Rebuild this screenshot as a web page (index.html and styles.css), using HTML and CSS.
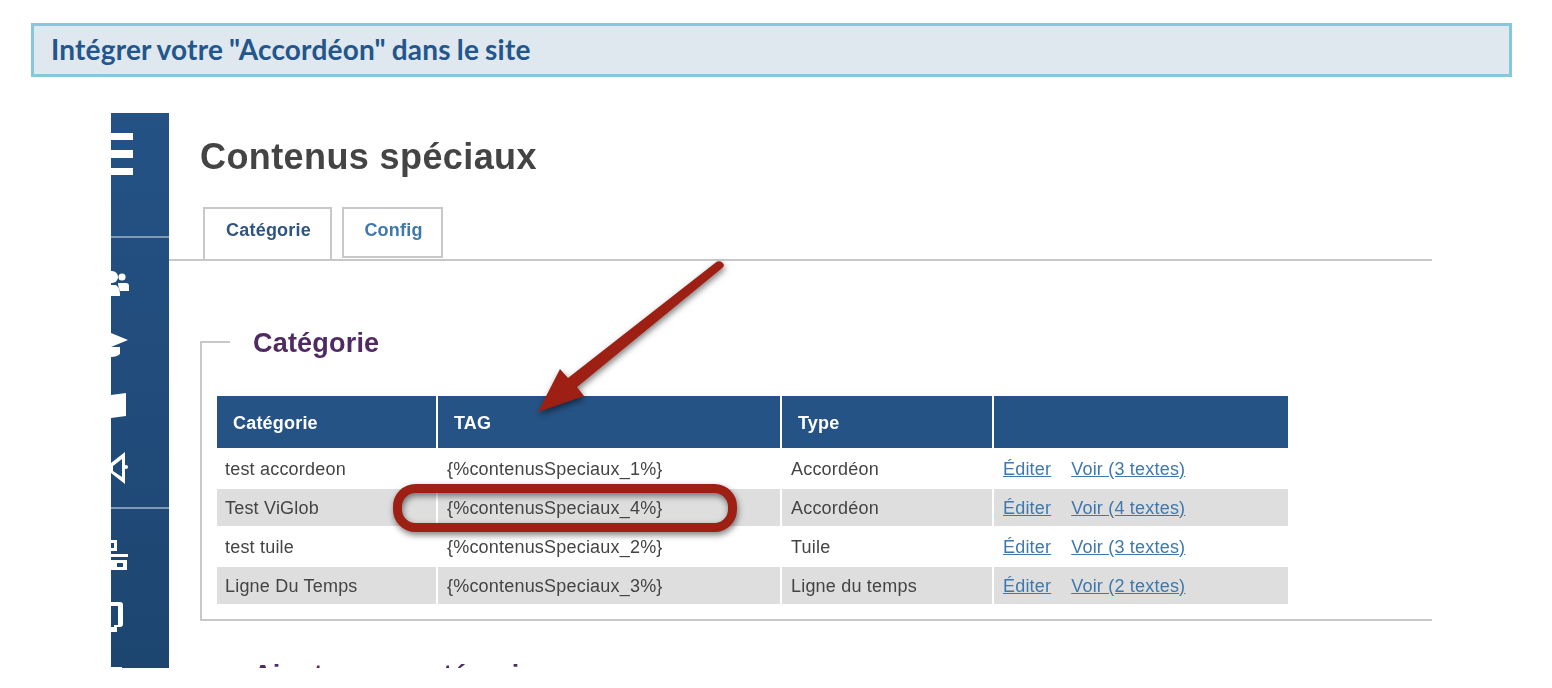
FILE: index.html
```html
<!DOCTYPE html>
<html lang="fr">
<head>
<meta charset="utf-8">
<title>Intégrer votre "Accordéon" dans le site</title>
<link rel="stylesheet" href="styles.css">
</head>
<body>
<div class="page">
  <h2 class="banner">Intégrer votre "Accordéon" dans le site</h2>
  <div class="shot">
    <aside class="side">
      <svg class="side-icons" viewBox="111 113 58 555" width="58" height="555" fill="#fff">
        <rect x="111" y="133" width="22" height="7"/>
        <rect x="111" y="150" width="22" height="8"/>
        <rect x="111" y="168" width="22" height="7"/>
        <rect x="111" y="236" width="58" height="2" fill="#7f9ab5"/>
        <circle cx="112" cy="277" r="6"/>
        <circle cx="122" cy="277" r="3.6"/>
        <path d="M118 283h8q3 0 3 3v5h-9q-2-5-2-8z"/>
        <path d="M111 285h5q4 3 4 9v2h-9z"/>
        <path d="M111 333l17 7-17 7z"/>
        <path d="M111 347h9v7q-3 3-9 3z"/>
        <path d="M111 395l15-2v23l-15 2z"/>
        <path d="M125 452v32L111 473v-10zM122 459l-9 7v5l9 6z" fill-rule="evenodd"/>
        <circle cx="126" cy="467" r="2"/>
        <rect x="111" y="507" width="58" height="2" fill="#7f9ab5"/>
        <path d="M111 540h6v11h-6zM111 543v5h3v-5z" fill-rule="evenodd"/>
        <rect x="111" y="554" width="17" height="3"/>
        <path d="M111 560h16v10h-16zM117 563v4h6v-4z" fill-rule="evenodd"/>
        <path d="M111 602h9q3 0 3 3v19q0 3-3 3h-3v5h-6v-5h3v-2h4v-19h-7z"/>
        <rect x="111" y="667" width="11" height="1"/>
      </svg>
    </aside>
    <main class="content">
      <h1 class="title">Contenus spéciaux</h1>
      <nav class="tabs">
        <a class="tab tab-on">Catégorie</a>
        <a class="tab tab-off">Config</a>
      </nav>
      <section class="group">
        <h3 class="group-title">Catégorie</h3>
        <table class="grid">
          <colgroup><col class="c1"><col class="c2"><col class="c3"><col class="c4"></colgroup>
          <thead>
            <tr><th>Catégorie</th><th>TAG</th><th>Type</th><th></th></tr>
          </thead>
          <tbody>
            <tr><td>test accordeon</td><td>{%contenusSpeciaux_1%}</td><td>Accordéon</td><td><a class="lnk">Éditer</a><a class="lnk">Voir (3 textes)</a></td></tr>
            <tr><td>Test ViGlob</td><td>{%contenusSpeciaux_4%}</td><td>Accordéon</td><td><a class="lnk">Éditer</a><a class="lnk">Voir (4 textes)</a></td></tr>
            <tr><td>test tuile</td><td>{%contenusSpeciaux_2%}</td><td>Tuile</td><td><a class="lnk">Éditer</a><a class="lnk">Voir (3 textes)</a></td></tr>
            <tr><td>Ligne Du Temps</td><td>{%contenusSpeciaux_3%}</td><td>Ligne du temps</td><td><a class="lnk">Éditer</a><a class="lnk">Voir (2 textes)</a></td></tr>
          </tbody>
        </table>
      </section>
      <h3 class="next-title">Ajouter une catégorie</h3>
    </main>
    <svg class="marks" viewBox="111 113 1321 555" width="1321" height="555">
      <rect class="ring" x="397.500" y="488.500" width="335" height="39" rx="18"/>
      <path class="arrow" d="M717 261.500Q722 260 724 265Q724 267 721 269L577 387L584 396L538 412L560 369L568 378Z"/>
    </svg>
  </div>
</div>
</body>
</html>
```
FILE: styles.css
```css
* { box-sizing: border-box; }
html, body { margin: 0; background: #fff; }
body { height: 688px; overflow: hidden; font-family: "Liberation Sans", Arial, sans-serif; }
.page { padding: 23px 40px 0 31px; }
.banner {
  margin: 0;
  width: 1481px;
  height: 54px;
  padding-left: 17px;
  border: 3px solid #85c8da;
  background: #dfe7ef;
  color: #22568c;
  font: 700 28px/46px Lato, "Liberation Sans", sans-serif;
  letter-spacing: .2px;
  word-spacing: -1px;
}
.shot {
  position: relative;
  display: flex;
  width: 1321px;
  height: 555px;
  margin: 36px 0 0 80px;
  overflow: hidden;
  filter: blur(.6px);
}
.side {
  flex: 0 0 58px;
  height: 555px;
  background: linear-gradient(#245285, #1d4570);
}
.side-icons { display: block; }
.content { flex: 1; min-width: 0; }
.title {
  margin: 23px 0 0 31px;
  color: #444;
  font-size: 36px;
  line-height: 42px;
  font-weight: 700;
  letter-spacing: .4px;
}
.tabs {
  display: flex;
  gap: 10px;
  height: 54px;
  margin-top: 29px;
  padding-left: 34px;
  border-bottom: 2px solid #c8c8c8;
}
.tab {
  height: 52px;
  padding-left: 2px;
  border: 2px solid #c8c8c8;
  font-size: 18px;
  font-weight: 700;
  letter-spacing: .2px;
  line-height: 43px;
  text-align: center;
}
.tab-on { width: 129px; border-bottom: 0; color: #2f5480; }
.tab-off { width: 101px; height: 51px; color: #3f78ad; }
.group {
  display: flow-root;
  position: relative;
  margin: 80px 0 0 31px;
  height: 280px;
  padding-left: 15px;
  border-left: 2px solid #c8c8c8;
  border-bottom: 2px solid #c8c8c8;
}
.group::before {
  content: "";
  position: absolute;
  left: 0;
  top: 0;
  width: 28px;
  height: 2px;
  background: #c8c8c8;
}
.group-title, .next-title {
  margin: 0;
  color: #4f2a63;
  font-size: 27px;
  font-weight: 700;
  line-height: 30px;
  letter-spacing: .2px;
}
.group-title { margin: -13px 0 0 36px; }
.next-title { margin: 39px 0 0 84px; }
.grid {
  width: 1075px;
  margin: 36px 0 0 -2px;
  table-layout: fixed;
  border-collapse: separate;
  border-spacing: 2px;
  font-size: 18px;
  letter-spacing: .2px;
  color: #444;
}
.c1 { width: 219px; }
.c2 { width: 342px; }
.c3 { width: 210px; }
.c4 { width: 294px; }
.grid th {
  height: 52px;
  padding: 2px 0 0 16px;
  background: #265386;
  color: #fff;
  font-size: 18px;
  font-weight: 700;
  text-align: left;
}
.grid td { height: 37px; padding: 2px 0 0 9px; white-space: nowrap; }
.grid td:first-child { padding-left: 8px; }
.grid tbody tr:nth-child(even) td { background: #dedede; }
.lnk { color: #3f78ad; text-decoration: underline; }
.lnk + .lnk { margin-left: 20px; }
.marks {
  position: absolute;
  left: 0;
  top: 0;
  filter: drop-shadow(1px 3px 3px rgba(0,0,0,.5));
}
.ring { fill: none; stroke: #9e2015; stroke-width: 9; }
.arrow { fill: #9e2015; }
```
